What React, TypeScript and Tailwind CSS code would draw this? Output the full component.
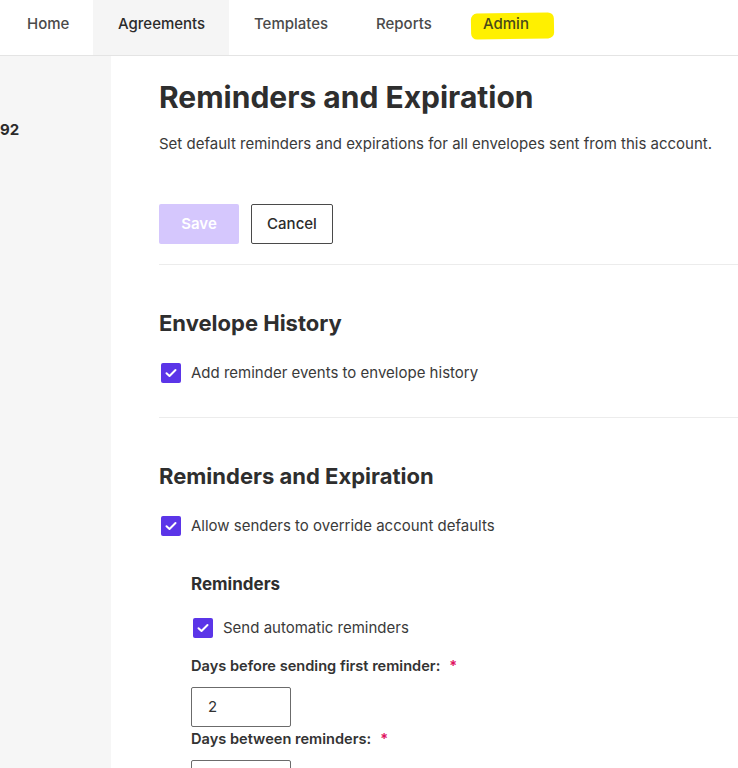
import React from "react";

const font = { fontFamily: "Inter, Lato, 'Noto Sans', sans-serif" };

function Check({ className = "" }: { className?: string }) {
  return (
    <span className={`flex h-5 w-5 shrink-0 items-center justify-center rounded-[2px] bg-[#5b35e8] ${className}`}>
      <svg width="12" height="10" viewBox="0 0 12 10" fill="none">
        <path d="M1.5 5.2 L4.5 8 L10.5 2" stroke="white" strokeWidth="2" strokeLinecap="round" strokeLinejoin="round" />
      </svg>
    </span>
  );
}

export default function App() {
  return (
    <div className="h-[768px] w-[738px] overflow-hidden bg-white text-[#2e2e2e]" style={font}>
      <nav className="flex h-[56px] items-stretch border-b border-[#e4e4e4] text-[15px] font-medium leading-[20px] text-[#4a4a4a]">
        <div className="flex w-[93px] items-start pl-[27px] pt-[14px]">Home</div>
        <div className="flex w-[136px] items-start bg-[#f5f5f5] pl-[25px] pt-[14px] text-[#2b2b2b]">Agreements</div>
        <div className="flex w-[122px] items-start pl-[25px] pt-[14px]">Templates</div>
        <div className="flex w-[107px] items-start pl-[25px] pt-[14px]">Reports</div>
        <div className="relative flex items-start pl-[25px] pt-[14px]">
          <span className="absolute left-[13px] top-[13px] h-[26px] w-[83px] -rotate-1 rounded-[6px] bg-[#fff000]" />
          <span className="relative text-[#4a4a1a]">Admin</span>
        </div>
      </nav>
      <div className="flex h-[712px]">
        <aside className="w-[111px] shrink-0 bg-[#f6f6f6] pt-[64px] text-[15px] font-bold leading-[20px] text-[#2b2b2b]">
          <div className="whitespace-nowrap">92</div>
        </aside>
        <main className="flex-1 pl-[48px]">
          <h1 className="mt-[21px] text-[30px] font-bold leading-[40px] text-[#2e2e2e]">Reminders and Expiration</h1>
          <p className="mt-[17px] text-[15px] leading-[20px] text-[#3a3a3a]">
            Set default reminders and expirations for all envelopes sent from this account.
          </p>
          <div className="mt-[50px] flex gap-[12px]">
            <button className="h-[40px] w-[80px] rounded-[2px] bg-[#d5c7fd] text-[15px] font-semibold text-white">Save</button>
            <button className="h-[40px] w-[82px] rounded-[2px] border border-[#4a4a4a] text-[15px] font-medium text-[#2b2b2b]">Cancel</button>
          </div>
          <div className="mt-[20px] border-t border-[#ececec]" />
          <h2 className="mt-[44px] text-[22px] font-bold leading-[28px]">Envelope History</h2>
          <label className="ml-[2px] mt-[26px] flex items-center gap-[10px] text-[15px] leading-[20px] text-[#3a3a3a]">
            <Check />
            <span>Add reminder events to envelope history</span>
          </label>
          <div className="mt-[34px] border-t border-[#ececec]" />
          <h2 className="mt-[44px] text-[22px] font-bold leading-[28px]">Reminders and Expiration</h2>
          <label className="ml-[2px] mt-[26px] flex items-center gap-[10px] text-[15px] leading-[20px] text-[#3a3a3a]">
            <Check />
            <span>Allow senders to override account defaults</span>
          </label>
          <div className="pl-[32px]">
            <h3 className="mt-[37px] text-[17px] font-bold leading-[22px]">Reminders</h3>
            <label className="ml-[2px] mt-[23px] flex items-center gap-[10px] text-[15px] leading-[20px] text-[#3a3a3a]">
              <Check />
              <span>Send automatic reminders</span>
            </label>
            <div className="mt-[18px] flex items-center text-[14.6px] font-semibold leading-[20px] text-[#333]">
              Days before sending first reminder:
              <span className="ml-[9px] text-[#e0115f]">*</span>
            </div>
            <div className="mt-[11px] flex h-[40px] w-[100px] items-center rounded-[2px] border border-[#6b6b6b] pl-[16px] text-[15px] text-[#333]">2</div>
            <div className="mt-[2px] flex items-center text-[14.6px] font-semibold leading-[20px] text-[#333]">
              Days between reminders:
              <span className="ml-[9px] text-[#e0115f]">*</span>
            </div>
            <div className="mt-[11px] h-[40px] w-[100px] rounded-[2px] border border-[#6b6b6b]" />
          </div>
        </main>
      </div>
    </div>
  );
}
